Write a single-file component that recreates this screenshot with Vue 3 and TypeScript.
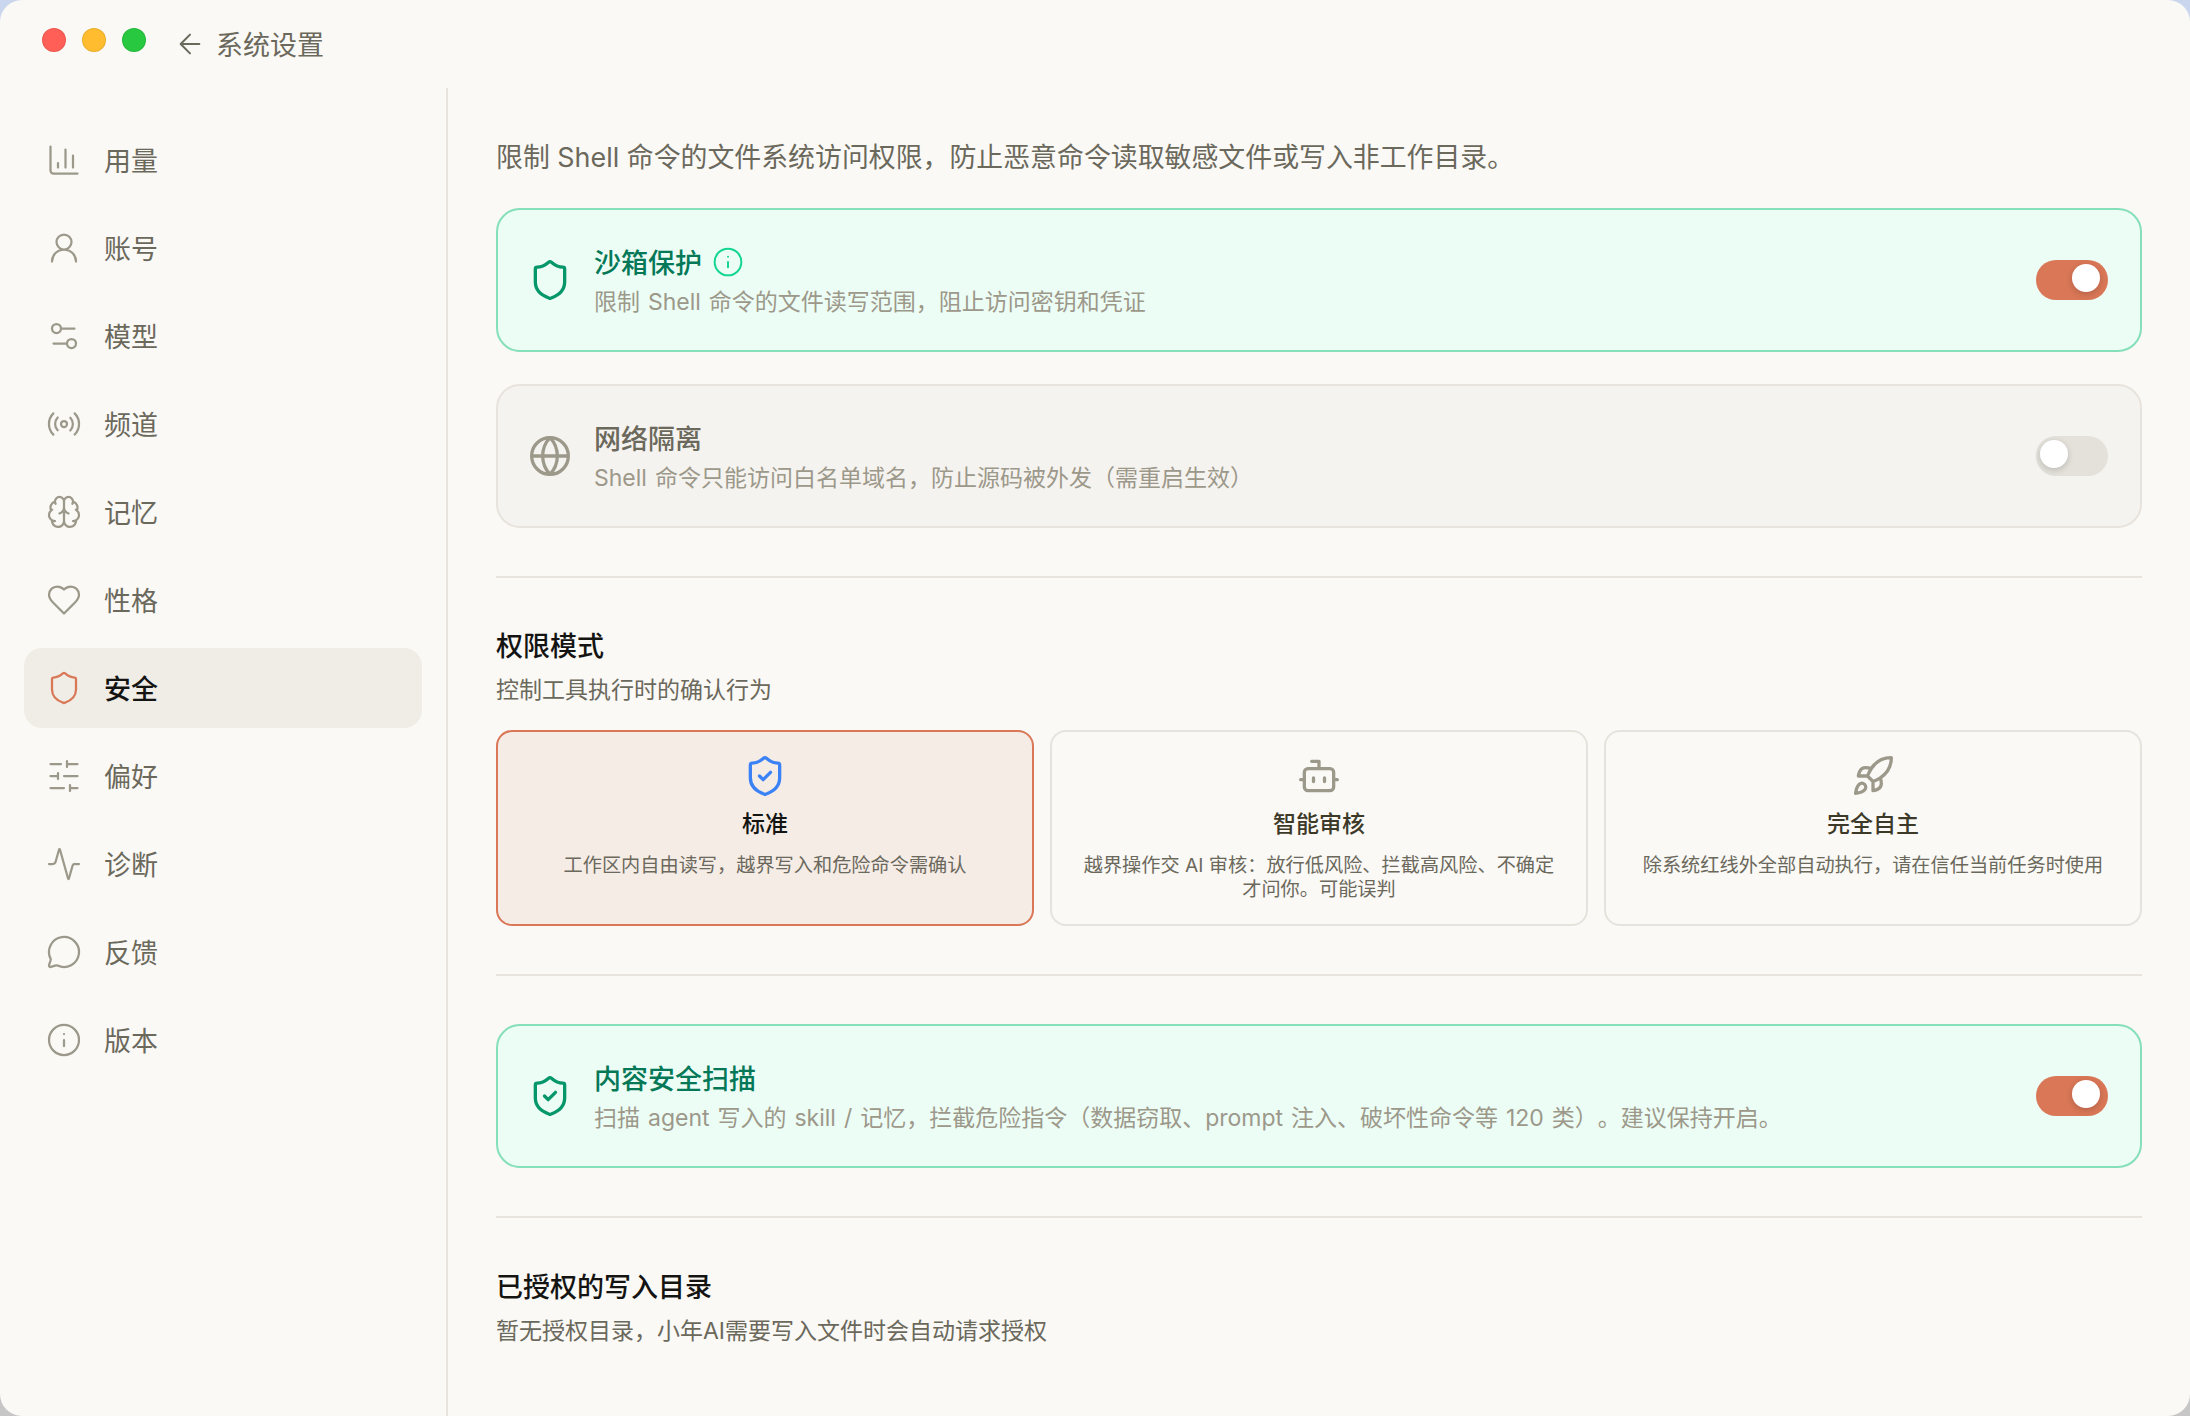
<template>
  <div class="window">
    <header class="titlebar">
      <div class="traffic">
        <span class="dot dot-red"></span>
        <span class="dot dot-yellow"></span>
        <span class="dot dot-green"></span>
      </div>
      <svg class="back-icon" viewBox="0 0 24 24"><path :d="icons.arrowLeft" /></svg>
      <span class="titlebar-text">系统设置</span>
    </header>

    <div class="body">
      <nav class="sidebar">
        <div
          v-for="item in navItems"
          :key="item.label"
          :class="['nav-item', { active: item.label === activeNav }]"
        >
          <svg class="nav-icon" viewBox="0 0 24 24"><path :d="item.icon" /></svg>
          <span class="nav-label">{{ item.label }}</span>
        </div>
      </nav>

      <main class="content">
        <p class="intro">限制 Shell 命令的文件系统访问权限，防止恶意命令读取敏感文件或写入非工作目录。</p>

        <div class="switch-list">
          <div v-for="card in topCards" :key="card.title" :class="['switch-card', { on: card.on }]">
            <svg class="card-icon" viewBox="0 0 24 24"><path :d="card.icon" /></svg>
            <div class="card-text">
              <div class="card-title">
                {{ card.title }}
                <svg v-if="card.hint" class="hint-icon" viewBox="0 0 24 24"><path :d="icons.info" /></svg>
              </div>
              <div class="card-desc">{{ card.desc }}</div>
            </div>
            <div class="toggle"><span class="knob"></span></div>
          </div>
        </div>

        <div class="divider"></div>

        <h3 class="section-title first">权限模式</h3>
        <div class="section-sub">控制工具执行时的确认行为</div>
        <div class="mode-grid">
          <div v-for="mode in modes" :key="mode.title" :class="['mode-card', { selected: mode.title === activeMode }]">
            <svg class="mode-icon" viewBox="0 0 24 24"><path :d="mode.icon" /></svg>
            <div class="mode-title">{{ mode.title }}</div>
            <div class="mode-desc">{{ mode.desc }}</div>
          </div>
        </div>

        <div class="divider"></div>

        <div class="switch-card on">
          <svg class="card-icon" viewBox="0 0 24 24"><path :d="icons.shieldCheck" /></svg>
          <div class="card-text">
            <div class="card-title">内容安全扫描</div>
            <div class="card-desc">扫描 agent 写入的 skill / 记忆，拦截危险指令（数据窃取、prompt 注入、破坏性命令等 120 类）。建议保持开启。</div>
          </div>
          <div class="toggle"><span class="knob"></span></div>
        </div>

        <div class="divider"></div>

        <h3 class="section-title last">已授权的写入目录</h3>
        <div class="section-sub">暂无授权目录，小年AI需要写入文件时会自动请求授权</div>
      </main>
    </div>
  </div>
</template>

<script setup lang="ts">
const shield = 'M20 13c0 5-3.5 7.5-7.66 8.95a1 1 0 0 1-.67-.01C7.5 20.5 4 18 4 13V6a1 1 0 0 1 1-1c2 0 4.5-1.2 6.24-2.72a1.17 1.17 0 0 1 1.52 0C14.51 3.81 17 5 19 5a1 1 0 0 1 1 1z'
const ring = 'M2 12a10 10 0 1 0 20 0a10 10 0 1 0-20 0'

const icons = {
  arrowLeft: 'm12 19-7-7 7-7M19 12H5',
  chart: 'M3 3v16a2 2 0 0 0 2 2h16M18 17V9M13 17V5M8 17v-3',
  user: 'M7 8a5 5 0 1 0 10 0a5 5 0 1 0-10 0M20 21a8 8 0 0 0-16 0',
  tune: 'M14 17H5M19 7h-9M4 7a3 3 0 1 0 6 0a3 3 0 1 0-6 0M14 17a3 3 0 1 0 6 0a3 3 0 1 0-6 0',
  radio: 'M4.9 19.1C1 15.2 1 8.8 4.9 4.9M7.8 16.2c-2.3-2.3-2.3-6.1 0-8.5M10 12a2 2 0 1 0 4 0a2 2 0 1 0-4 0M16.2 7.8c2.3 2.3 2.3 6.1 0 8.5M19.1 4.9C23 8.8 23 15.1 19.1 19',
  brain: 'M12 5a3 3 0 1 0-5.997.125 4 4 0 0 0-2.526 5.77 4 4 0 0 0 .556 6.588A4 4 0 1 0 12 18ZM12 5a3 3 0 1 1 5.997.125 4 4 0 0 1 2.526 5.77 4 4 0 0 1-.556 6.588A4 4 0 1 1 12 18ZM15 13a4.5 4.5 0 0 1-3-4 4.5 4.5 0 0 1-3 4M17.599 6.5a3 3 0 0 0 .399-1.375M6.003 5.125A3 3 0 0 0 6.401 6.5M3.477 10.896a4 4 0 0 1 .585-.396M19.938 10.5a4 4 0 0 1 .585.396M6 18a4 4 0 0 1-1.967-.516M19.967 17.484A4 4 0 0 1 18 18',
  heart: 'M19 14c1.49-1.46 3-3.21 3-5.5A5.5 5.5 0 0 0 16.5 3c-1.76 0-3 .5-4.5 2-1.5-1.5-2.74-2-4.5-2A5.5 5.5 0 0 0 2 8.5c0 2.3 1.5 4.05 3 5.5l7 7Z',
  shield,
  shieldCheck: shield + 'M9 12l2 2 4-4',
  sliders: 'M21 4h-7M10 4H3M21 12h-9M8 12H3M21 20h-5M12 20H3M14 2v4M8 10v4M16 18v4',
  activity: 'M22 12h-2.48a2 2 0 0 0-1.93 1.46l-2.35 8.36a.25.25 0 0 1-.48 0L9.24 2.18a.25.25 0 0 0-.48 0l-2.35 8.36A2 2 0 0 1 4.49 12H2',
  message: 'M2.992 16.342a2 2 0 0 1 .094 1.167l-1.065 3.29a1 1 0 0 0 1.236 1.168l3.413-.998a2 2 0 0 1 1.099.092 10 10 0 1 0-4.777-4.719',
  info: ring + 'M12 16v-4M12 8h.01',
  globe: ring + 'M12 2a14.5 14.5 0 0 0 0 20 14.5 14.5 0 0 0 0-20M2 12h20',
  bot: 'M12 8V4H8M6 8h12a2 2 0 0 1 2 2v8a2 2 0 0 1-2 2H6a2 2 0 0 1-2-2v-8a2 2 0 0 1 2-2M2 14h2M20 14h2M15 13v2M9 13v2',
  rocket: 'M4.5 16.5c-1.5 1.26-2 5-2 5s3.74-.5 5-2c.71-.84.7-2.13-.09-2.91a2.18 2.18 0 0 0-2.91-.09zM12 15l-3-3a22 22 0 0 1 2-3.95A12.88 12.88 0 0 1 22 2c0 2.72-.78 7.5-6 11a22.35 22.35 0 0 1-4 2zM9 12H4s.55-3.03 2-4c1.62-1.08 5 0 5 0M12 15v5s3.03-.55 4-2c1.08-1.62 0-5 0-5',
}

const activeNav = '安全'
const activeMode = '标准'

const navItems = [
  { label: '用量', icon: icons.chart },
  { label: '账号', icon: icons.user },
  { label: '模型', icon: icons.tune },
  { label: '频道', icon: icons.radio },
  { label: '记忆', icon: icons.brain },
  { label: '性格', icon: icons.heart },
  { label: '安全', icon: icons.shield },
  { label: '偏好', icon: icons.sliders },
  { label: '诊断', icon: icons.activity },
  { label: '反馈', icon: icons.message },
  { label: '版本', icon: icons.info },
]

const topCards = [
  { title: '沙箱保护', desc: '限制 Shell 命令的文件读写范围，阻止访问密钥和凭证', icon: icons.shield, on: true, hint: true },
  { title: '网络隔离', desc: 'Shell 命令只能访问白名单域名，防止源码被外发（需重启生效）', icon: icons.globe, on: false, hint: false },
]

const modes = [
  { title: '标准', desc: '工作区内自由读写，越界写入和危险命令需确认', icon: icons.shieldCheck },
  { title: '智能审核', desc: '越界操作交 AI 审核：放行低风险、拦截高风险、不确定才问你。可能误判', icon: icons.bot },
  { title: '完全自主', desc: '除系统红线外全部自动执行，请在信任当前任务时使用', icon: icons.rocket },
]
</script>

<style>
html, body { margin: 0; background: linear-gradient(#c9d6ee, #c6c6c6); }
</style>

<style scoped>
svg { fill: none; stroke: currentColor; stroke-linecap: round; stroke-linejoin: round; flex-shrink: 0; }

.window {
  height: 100vh;
  overflow: hidden;
  box-sizing: border-box;
  background: #faf9f5;
  border-radius: 22px;
  color: #6b685c;
  font-family: Inter, "Noto Sans CJK SC", sans-serif;
  font-size: 27px;
  text-spacing-trim: space-all;
}

.titlebar { display: flex; align-items: center; height: 88px; padding-left: 42px; }
.traffic { display: flex; gap: 16px; margin-right: 28px; margin-top: -8px; }
.dot { width: 24px; height: 24px; border-radius: 50%; box-sizing: border-box; border: 1px solid rgba(0, 0, 0, 0.08); }
.dot-red { background: #ff5f57; }
.dot-yellow { background: #febc2e; }
.dot-green { background: #28c840; }
.back-icon { width: 32px; height: 32px; stroke-width: 1.5; margin-right: 10px; }
.titlebar-text { padding-bottom: 2px; }

.body { display: flex; height: calc(100% - 88px); }

.sidebar {
  width: 448px;
  box-sizing: border-box;
  padding: 32px 24px;
  border-right: 2px solid #e8e3dc;
  display: flex;
  flex-direction: column;
  gap: 8px;
}
.nav-item { display: flex; align-items: center; gap: 22px; height: 80px; padding-left: 22px; border-radius: 18px; }
.nav-icon { width: 36px; height: 36px; stroke-width: 1.5; color: #9c988a; }
.nav-label { padding-bottom: 2px; }
.nav-item.active { background: #f0ede6; color: #141413; font-weight: 500; }
.nav-item.active .nav-icon { color: #d97757; }

.content { flex: 1; padding: 48px 48px 0; min-width: 0; }
.intro { margin: 0 0 30px; font-size: 26.9px; line-height: 42px; }

.switch-list { display: flex; flex-direction: column; gap: 32px; }
.switch-card {
  display: flex;
  align-items: center;
  height: 144px;
  box-sizing: border-box;
  padding: 0 32px 0 30px;
  border: 2px solid #e8e3dc;
  border-radius: 24px;
  background: #f5f3ef;
}
.switch-card.on { background: #ecfdf5; border-color: #85dfb8; }
.card-icon { width: 44px; height: 44px; stroke-width: 1.8; color: #9c988a; margin-right: 22px; }
.on .card-icon { color: #059669; }
.card-text { flex: 1; min-width: 0; }
.card-title { display: flex; align-items: center; gap: 10px; height: 40px; font-weight: 500; }
.on .card-title { color: #047857; }
.hint-icon { width: 32px; height: 32px; stroke-width: 1.5; color: #14d691; }
.card-desc { margin-top: 3px; font-size: 23px; line-height: 34px; word-spacing: 1.5px; color: #9c988a; }

.toggle { position: relative; width: 72px; height: 40px; border-radius: 20px; background: #e3e1da; }
.on .toggle { background: #d97757; }
.knob {
  position: absolute;
  top: 4px;
  left: 4px;
  width: 28px;
  height: 28px;
  border-radius: 50%;
  background: #fff;
  box-shadow: 0 2px 6px rgba(0, 0, 0, 0.18);
}
.on .knob { left: 36px; }

.divider { height: 2px; margin: 48px 0; background: #e8e3dc; }

.section-title { margin: 0; font-size: 27px; line-height: 40px; font-weight: 500; color: #141413; }
.section-title.first { margin-top: 49px; }
.section-title.last { margin-top: 50px; }
.section-sub { margin-top: 3px; font-size: 23px; line-height: 40px; color: #6b685c; }

.mode-grid { display: grid; grid-template-columns: repeat(3, 1fr); gap: 16px; margin-top: 20px; }
.mode-card {
  display: flex;
  flex-direction: column;
  align-items: center;
  height: 196px;
  box-sizing: border-box;
  padding: 22px 28px 0;
  border: 2px solid #e5e3dc;
  border-radius: 16px;
  text-align: center;
}
.mode-card.selected { background: #f5ece6; border-color: #d97757; }
.mode-icon { width: 44px; height: 44px; stroke-width: 1.8; color: #9c988a; }
.selected .mode-icon { color: #3b82f6; }
.mode-title { margin-top: 10px; font-size: 23px; line-height: 32px; font-weight: 500; color: #3d3929; }
.selected .mode-title { color: #141413; }
.mode-desc { margin-top: 13px; font-size: 19.2px; line-height: 24px; color: #6b685c; }
</style>
